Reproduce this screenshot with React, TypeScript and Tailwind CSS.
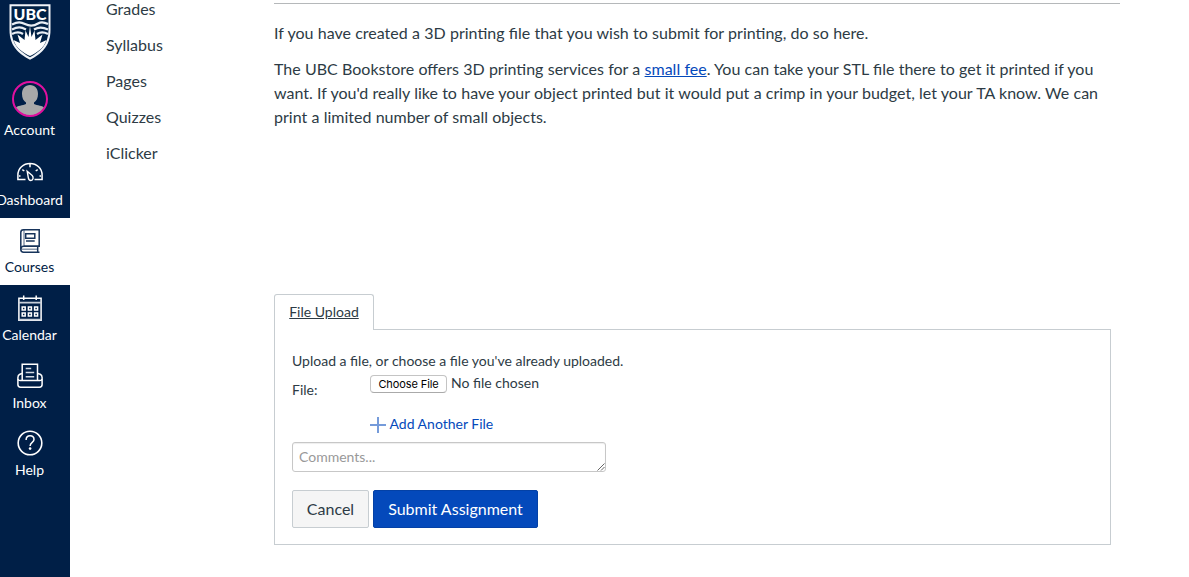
import type { ReactNode } from "react";

function Crest() {
  return (
    <svg width="42" height="56" viewBox="0 0 42 56" className="block">
      <path d="M0.5 0.2H41.5V26C41.5 43 31 50.5 21 55.8C11 50.5 0.5 43 0.5 26Z" fill="#f1f4f8" />
      <path d="M2.500 2.200H39.500V26C39.500 41 30.500 48 21 53.200C11.500 48 2.500 41 2.500 26Z" fill="#002145" />
      <text x="21" y="15.800" textAnchor="middle" textLength="33" lengthAdjust="spacingAndGlyphs" fontFamily="Lato, sans-serif" fontWeight="900" fontSize="15.500" fill="#fff">UBC</text>
      <g fill="none" stroke="#e9eef4" strokeWidth="2.200">
        <path d="M3 20.500C9 17.500 12 18 16 20S25 22 29 19.500S36 18.500 39 20" />
        <path d="M3 25.500C9 22.500 12 23 17 25.500M25 25.500C30 22.500 34 23 39 25.500" />
        <path d="M3 30C8 27.500 11 28 14 30M28 30C32 27.500 35 28 39 30" />
      </g>
      <path d="M4.500 36L11 39L8.500 30.500L15.500 36L16.500 26.500L19.500 33L21 22L22.500 33L25.500 26.500L26.500 36L33.500 30.500L31 39L37.500 36C35 44 28 48.500 21 52C14 48.500 7 44 4.500 36Z" fill="#fff" />
    </svg>
  );
}

function Avatar() {
  return (
    <svg width="36" height="36" viewBox="0 0 36 36" className="block">
      <defs>
        <clipPath id="avatar-clip"><circle cx="18" cy="18" r="16.500" /></clipPath>
      </defs>
      <g clipPath="url(#avatar-clip)" fill="#a9a9a9">
        <path d="M18 4C13 4 10 7.500 10 13C10 17 11.500 20 14 21.500V23C11 24.500 5 24.500 3.500 27V36H32.500V27C31 24.500 25 24.500 22 23V21.500C24.500 20 26 17 26 13C26 7.500 23 4 18 4Z" />
      </g>
      <circle cx="18" cy="18" r="17" fill="none" stroke="#e0109f" strokeWidth="2" />
    </svg>
  );
}

function DashboardIcon() {
  return (
    <svg width="26" height="20" viewBox="0 0 26 20" fill="none" stroke="#fff" strokeWidth="1.500" className="block">
      <path d="M8.500 17.600H0.900V13C0.900 6.300 6.300 1.500 13 1.500S25.100 6.300 25.100 13V17.600H17.500" />
      <path d="M10.200 9.200L15.200 13.500C16.800 15.200 16.200 18.500 13.900 18.500C12.200 18.500 11.500 17.200 11.300 15.700Z" strokeWidth="1.400" />
      <path d="M13 2V5.300M5.300 7.600L7.300 9M20.700 7.600L18.700 9M2 14H3.500M22.500 14H24" strokeWidth="1.500" />
    </svg>
  );
}

function CoursesIcon() {
  return (
    <svg width="20" height="24" viewBox="0 0 20 24" fill="none" stroke="#17345b" strokeWidth="1.500" className="block">
      <path d="M4 17.300H19.200V0.800H3.500C1.800 0.800 0.800 1.800 0.800 3.500V20.300" />
      <path d="M19.500 17.300H3.600C1.800 17.300 0.800 18.500 0.800 20.200S1.900 23.200 3.600 23.200H19.500M17.700 17.500V23" />
      <path d="M4 1V17M1.500 20.300H17" strokeOpacity="0.5" />
      <path d="M5.700 4.700H14.800V9.200H5.700ZM6 12.100H14.700" />
    </svg>
  );
}

function CalendarIcon() {
  return (
    <svg width="24" height="27" viewBox="0 0 24 27" fill="none" stroke="#fff" strokeWidth="1.500" className="block">
      <path d="M0.900 3.200H23.100V25.200H0.900Z" />
      <path d="M1 7.700H23M1 24.700H23" stroke="#c6ced9" strokeWidth="1.700" />
      <path d="M5.700 0.500V5M18.200 0.500V5" />
      <path d="M4.200 12H7.200V15H4.200ZM10.400 12H13.400V15H10.400ZM16.600 12H19.600V15H16.600ZM4.200 18.100H7.200V21.100H4.200ZM10.400 18.100H13.400V21.100H10.400ZM16.600 18.100H19.600V21.100H16.600Z" />
    </svg>
  );
}

function InboxIcon() {
  return (
    <svg width="26" height="26" viewBox="0 0 26 26" fill="none" stroke="#fff" strokeWidth="1.500" className="block">
      <path d="M5.200 17.500V1.200H20.500V17.500" />
      <path d="M5 10.500L2.800 11.200C1.500 11.700 0.900 13 0.900 14.500V21.500C0.900 23.300 2 24.200 3.600 24.200H22.400C24 24.200 25.100 23.300 25.100 21.500V14.500C25.100 13 24.500 11.700 23.200 11.200L20.700 10.500" />
      <path d="M1 16C1.200 17.200 2 17.600 3.200 17.600H22.800C24 17.600 24.800 17.200 25 16" />
      <path d="M8.700 5.500H14.200M8.700 9.500H17.200M8.700 13.700H17.200" stroke="#d4dbe4" />
    </svg>
  );
}

function HelpIcon() {
  return (
    <svg width="26" height="26" viewBox="0 0 26 26" fill="none" stroke="#fff" className="block">
      <circle cx="13" cy="13" r="11.800" strokeWidth="1.600" />
      <path d="M9.100 10C9.100 7.500 10.800 5.700 13.100 5.700S17 7.300 17 9.500C17 12.600 13.100 12.200 13.100 16" strokeWidth="1.500" />
      <circle cx="13.100" cy="18.600" r="1.300" fill="#fff" stroke="none" />
    </svg>
  );
}

type NavItemProps = { label: string; icon: ReactNode; className: string };

function NavItem({ label, icon, className }: NavItemProps) {
  return (
    <li>
      <a href="#" className={`flex flex-col items-center text-sm leading-5 ${className}`}>
        {icon}
        <span className="mt-auto">{label}</span>
      </a>
    </li>
  );
}

const courseLinks = ["Grades", "Syllabus", "Pages", "Quizzes", "iClicker"];

export default function App() {
  return (
    <div className="flex h-[577px] overflow-hidden bg-white font-['Lato',sans-serif] text-[#2d3b45]">
      <nav className="w-[70px] shrink-0 overflow-hidden bg-[#001f47] text-white">
        <div className="-ml-[11px] w-[81px]">
          <div className="flex h-[71px] justify-center pt-1">
            <Crest />
          </div>
          <ul>
            <NavItem label="Account" icon={<Avatar />} className="h-[79px] pt-[10px] pb-[10px]" />
            <NavItem label="Dashboard" icon={<DashboardIcon />} className="h-[68px] pt-3 pb-2" />
            <NavItem label="Courses" icon={<CoursesIcon />} className="h-[67px] bg-white pt-[11px] pb-2 text-[#002145]" />
            <NavItem label="Calendar" icon={<CalendarIcon />} className="h-[68px] pt-[10px] pb-2" />
            <NavItem label="Inbox" icon={<InboxIcon />} className="h-[68px] pt-[10px] pb-2" />
            <NavItem label="Help" icon={<HelpIcon />} className="h-[67px] pt-[9px] pb-2" />
          </ul>
        </div>
      </nav>

      <aside className="w-[204px] shrink-0 pl-9">
        <ul className="-mt-[9px]">
          {courseLinks.map((label) => (
            <li key={label} className="h-9 leading-9">
              <a href="#">{label}</a>
            </li>
          ))}
        </ul>
      </aside>

      <main className="w-[846px] shrink-0 pt-[3px]">
        <div className="border-t border-[#b5b8ba] pt-[17px] [word-spacing:0.18px]">
          <p className="leading-6">If you have created a 3D printing file that you wish to submit for printing, do so here.</p>
          <p className="mt-3 leading-6">
            The UBC Bookstore offers 3D printing services for a{" "}
            <a href="#" className="text-[#0449bb] underline">small fee</a>. You can take your STL file there to get it printed if you want. If you'd really like to have your object printed but it would put a crimp in your budget, let your TA know. We can print a limited number of small objects.
          </p>
        </div>

        <section className="mt-[165px] w-[837px] text-sm leading-5">
          <div className="flex h-9">
            <div className="w-[100px] rounded-t-[3px] border border-b-0 border-[#c7cdd1] pt-[7px] text-center">
              <a href="#" className="underline">File Upload</a>
            </div>
            <div className="mt-[35px] flex-1 border-t border-[#c7cdd1]" />
          </div>
          <form className="h-[215px] border border-t-0 border-[#c7cdd1] px-[17px] pt-[21px]">
            <p>Upload a file, or choose a file you've already uploaded.</p>
            <div className="mt-1 flex">
              <span className="w-[78px] pt-[5px]">File:</span>
              <div className="flex items-start">
                <button type="button" className="h-[18px] w-[77px] rounded-[4px] border border-[#c4c4c4] border-b-[#aaa] bg-white pt-px font-['Inter',sans-serif] text-[11px] leading-[15px] tracking-[-0.1px] whitespace-nowrap text-black">Choose File</button>
                <span className="-mt-0.5 ml-1">No file chosen</span>
              </div>
            </div>
            <a href="#" className="mt-[14px] ml-[78px] flex w-fit items-start text-[#0449bb]">
              <svg width="16" height="16" viewBox="0 0 16 16" className="mt-[3px] mr-[3.500px]">
                <path d="M8 0V16M0 8H16" stroke="#0449bb" strokeOpacity="0.55" strokeWidth="2" />
              </svg>
              <span>Add Another File</span>
            </a>
            <div className="relative mt-2 h-[30px] w-[314px]">
              <textarea placeholder="Comments..." className="block h-[30px] w-[314px] resize-none overflow-hidden rounded-[3px] border border-[#c7c7c7] px-1.5 py-1 shadow-[inset_0_1px_1px_rgba(0,0,0,0.07)] placeholder:text-[#999]" />
              <svg width="8" height="8" viewBox="0 0 8 8" className="absolute right-[1px] bottom-[1px]">
                <path d="M0.500 7.500L7.500 0.500M4 7.500L7.500 4" stroke="#555" strokeWidth="0.900" />
              </svg>
            </div>
            <div className="mt-[18px] flex gap-1 text-base">
              <button type="button" className="h-[38px] w-[77px] rounded-[2px] border border-[#c7cdd1] bg-[#f5f5f5]">Cancel</button>
              <button type="button" className="h-[38px] w-[165px] rounded-[2px] border border-[#0441a6] bg-[#0449bb] text-white">Submit Assignment</button>
            </div>
          </form>
        </section>
      </main>
    </div>
  );
}
